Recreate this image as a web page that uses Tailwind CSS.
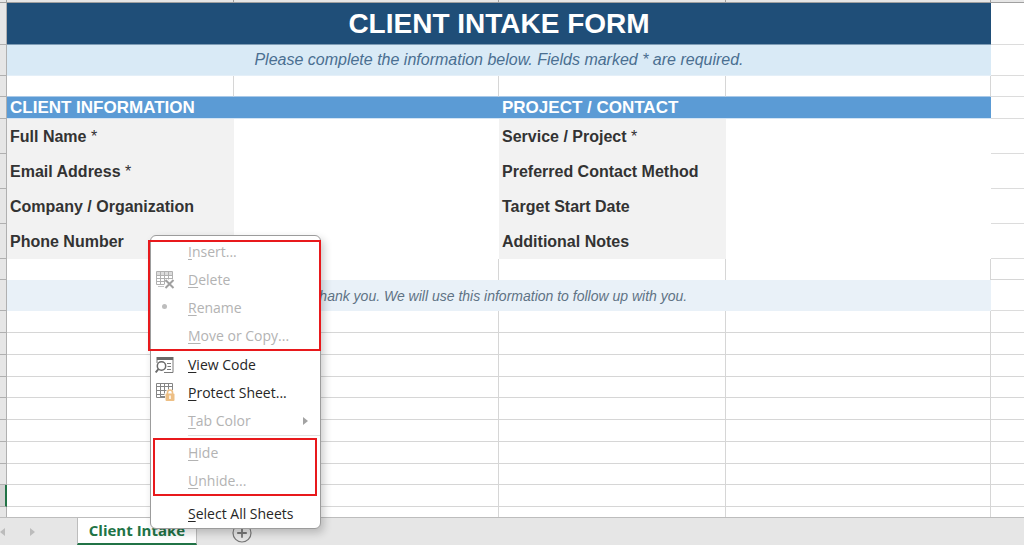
<!DOCTYPE html>
<html lang="en">
  <head>
    <meta charset="UTF-8" />
    <meta name="viewport" content="width=device-width, initial-scale=1.0" />
    <title>Client Intake</title>
    <script src="https://cdn.jsdelivr.net/npm/@tailwindcss/browser@4"></script>
  </head>
  <body class="h-screen flex flex-col overflow-hidden bg-white font-['Liberation_Sans',Arial,sans-serif]">

    <!-- Worksheet -->
    <main class="flex-1 min-h-0 overflow-hidden">
      <table class="w-full table-fixed border-separate border-spacing-0 text-base text-[#333333]">
        <colgroup>
          <col class="w-[7px]" />
          <col class="w-[227px]" />
          <col class="w-[265px]" />
          <col class="w-[227px]" />
          <col class="w-[265px]" />
          <col />
        </colgroup>
        <thead>
          <tr class="h-[3px] bg-[#e6e6e6]">
            <td class="border-r border-b border-[#a0a0a0]"></td>
            <td class="border-r border-b border-[#a0a0a0]"></td>
            <td class="border-r border-b border-[#a0a0a0]"></td>
            <td class="border-r border-b border-[#a0a0a0]"></td>
            <td class="border-r border-b border-[#a0a0a0]"></td>
            <td class="border-b border-[#a0a0a0]"></td>
          </tr>
        </thead>
        <tbody>
          <tr class="h-[42px]">
            <td class="border-r border-b border-[#b0b0b0] bg-[#e6e6e6]"></td>
            <th colspan="4" class="border-b border-[#7f9db6] bg-[#1f4e78] text-white text-[28px] leading-8 font-bold text-center">CLIENT INTAKE FORM</th>
            <td class="border-b border-[#dcdcdc]"></td>
          </tr>
          <tr class="h-[31px]">
            <td class="border-r border-b border-[#b0b0b0] bg-[#e6e6e6]"></td>
            <td colspan="4" class="border-b border-[#e4eff8] bg-[#d9eaf6] text-[#4a6f91] leading-5 italic text-center">Please complete the information below. Fields marked * are required.</td>
            <td class="border-b border-[#dcdcdc]"></td>
          </tr>
          <tr class="h-[21px]">
            <td class="border-r border-b border-[#b0b0b0] bg-[#e6e6e6]"></td>
            <td class="border-r border-b border-r-[#d6d6d6] border-b-[#a9c9e8]"></td>
            <td class="border-r border-b border-r-[#d6d6d6] border-b-[#a9c9e8]"></td>
            <td class="border-r border-b border-r-[#d6d6d6] border-b-[#a9c9e8]"></td>
            <td class="border-r border-b border-r-[#d6d6d6] border-b-[#a9c9e8]"></td>
            <td class="border-b border-[#dcdcdc]"></td>
          </tr>
          <tr class="h-[22px] text-[17px] leading-5 text-white text-left">
            <td class="border-r border-b border-[#b0b0b0] bg-[#e6e6e6]"></td>
            <th colspan="2" class="border-b border-[#d3e4f4] bg-[#5b9bd5] pl-[3px] font-bold">CLIENT INFORMATION</th>
            <th colspan="2" class="border-b border-[#d3e4f4] bg-[#5b9bd5] pl-[3px] font-bold">PROJECT / CONTACT</th>
            <td class="border-b border-[#dcdcdc]"></td>
          </tr>

          <!-- Form fields -->
          <tr class="h-[35px] leading-5 text-left">
            <td class="border-r border-b border-[#b0b0b0] bg-[#e6e6e6]"></td>
            <th class="bg-[#f2f2f2] pl-[3px] font-bold"><label for="full-name">Full Name <span class="font-normal">*</span></label></th>
            <td><input id="full-name" type="text" class="block w-full h-6 px-1 outline-none" /></td>
            <th class="bg-[#f2f2f2] pl-[3px] font-bold"><label for="service">Service / Project <span class="font-normal">*</span></label></th>
            <td><input id="service" type="text" class="block w-full h-6 px-1 outline-none" /></td>
            <td class="border-b border-[#dcdcdc]"></td>
          </tr>
          <tr class="h-[35px] leading-5 text-left">
            <td class="border-r border-b border-[#b0b0b0] bg-[#e6e6e6]"></td>
            <th class="bg-[#f2f2f2] pl-[3px] font-bold"><label for="email">Email Address <span class="font-normal">*</span></label></th>
            <td><input id="email" type="email" class="block w-full h-6 px-1 outline-none" /></td>
            <th class="bg-[#f2f2f2] pl-[3px] font-bold"><label for="contact-method">Preferred Contact Method</label></th>
            <td><input id="contact-method" type="text" class="block w-full h-6 px-1 outline-none" /></td>
            <td class="border-b border-[#dcdcdc]"></td>
          </tr>
          <tr class="h-[35px] leading-5 text-left">
            <td class="border-r border-b border-[#b0b0b0] bg-[#e6e6e6]"></td>
            <th class="bg-[#f2f2f2] pl-[3px] font-bold"><label for="company">Company / Organization</label></th>
            <td><input id="company" type="text" class="block w-full h-6 px-1 outline-none" /></td>
            <th class="bg-[#f2f2f2] pl-[3px] font-bold"><label for="start-date">Target Start Date</label></th>
            <td><input id="start-date" type="text" class="block w-full h-6 px-1 outline-none" /></td>
            <td class="border-b border-[#dcdcdc]"></td>
          </tr>
          <tr class="h-[35px] leading-5 text-left">
            <td class="border-r border-b border-[#b0b0b0] bg-[#e6e6e6]"></td>
            <th class="bg-[#f2f2f2] pl-[3px] font-bold"><label for="phone">Phone Number</label></th>
            <td><input id="phone" type="tel" class="block w-full h-6 px-1 outline-none" /></td>
            <th class="bg-[#f2f2f2] pl-[3px] font-bold"><label for="notes">Additional Notes</label></th>
            <td><input id="notes" type="text" class="block w-full h-6 px-1 outline-none" /></td>
            <td class="border-b border-[#dcdcdc]"></td>
          </tr>
          <tr class="h-[21px]">
            <td class="border-r border-b border-[#b0b0b0] bg-[#e6e6e6]"></td>
            <td class="border-r border-[#d6d6d6]"></td>
            <td class="border-r border-[#d6d6d6]"></td>
            <td class="border-r border-[#d6d6d6]"></td>
            <td class="border-r border-[#d6d6d6]"></td>
            <td class="border-b border-[#d6d6d6]"></td>
          </tr>
          <tr class="h-[31px]">
            <td class="border-r border-b border-[#b0b0b0] bg-[#e6e6e6]"></td>
            <td colspan="4" class="bg-[#e9f1f8] text-[#5f7385] text-sm italic text-center">Thank you. We will use this information to follow up with you.</td>
            <td class="border-b border-[#dcdcdc]"></td>
          </tr>

          <!-- Empty rows -->
          <tr class="h-[22px]">
            <td class="border-r border-b border-[#b0b0b0] bg-[#e6e6e6]"></td>
            <td class="border-r border-b border-[#d6d6d6]"></td>
            <td class="border-r border-b border-[#d6d6d6]"></td>
            <td class="border-r border-b border-[#d6d6d6]"></td>
            <td class="border-r border-b border-[#d6d6d6]"></td>
            <td class="border-b border-[#d6d6d6]"></td>
          </tr>
          <tr class="h-[22px]">
            <td class="border-r border-b border-[#b0b0b0] bg-[#e6e6e6]"></td>
            <td class="border-r border-b border-[#d6d6d6]"></td>
            <td class="border-r border-b border-[#d6d6d6]"></td>
            <td class="border-r border-b border-[#d6d6d6]"></td>
            <td class="border-r border-b border-[#d6d6d6]"></td>
            <td class="border-b border-[#d6d6d6]"></td>
          </tr>
          <tr class="h-[22px]">
            <td class="border-r border-b border-[#b0b0b0] bg-[#e6e6e6]"></td>
            <td class="border-r border-b border-[#d6d6d6]"></td>
            <td class="border-r border-b border-[#d6d6d6]"></td>
            <td class="border-r border-b border-[#d6d6d6]"></td>
            <td class="border-r border-b border-[#d6d6d6]"></td>
            <td class="border-b border-[#d6d6d6]"></td>
          </tr>
          <tr class="h-[21px]">
            <td class="border-r border-b border-[#b0b0b0] bg-[#e6e6e6]"></td>
            <td class="border-r border-b border-[#d6d6d6]"></td>
            <td class="border-r border-b border-[#d6d6d6]"></td>
            <td class="border-r border-b border-[#d6d6d6]"></td>
            <td class="border-r border-b border-[#d6d6d6]"></td>
            <td class="border-b border-[#d6d6d6]"></td>
          </tr>
          <tr class="h-[22px]">
            <td class="border-r border-b border-[#b0b0b0] bg-[#e6e6e6]"></td>
            <td class="border-r border-b border-[#d6d6d6]"></td>
            <td class="border-r border-b border-[#d6d6d6]"></td>
            <td class="border-r border-b border-[#d6d6d6]"></td>
            <td class="border-r border-b border-[#d6d6d6]"></td>
            <td class="border-b border-[#d6d6d6]"></td>
          </tr>
          <tr class="h-[22px]">
            <td class="border-r border-b border-[#b0b0b0] bg-[#e6e6e6]"></td>
            <td class="border-r border-b border-[#d6d6d6]"></td>
            <td class="border-r border-b border-[#d6d6d6]"></td>
            <td class="border-r border-b border-[#d6d6d6]"></td>
            <td class="border-r border-b border-[#d6d6d6]"></td>
            <td class="border-b border-[#d6d6d6]"></td>
          </tr>
          <tr class="h-[22px]">
            <td class="border-r border-b border-[#b0b0b0] bg-[#e6e6e6]"></td>
            <td class="border-r border-b border-[#d6d6d6]"></td>
            <td class="border-r border-b border-[#d6d6d6]"></td>
            <td class="border-r border-b border-[#d6d6d6]"></td>
            <td class="border-r border-b border-[#d6d6d6]"></td>
            <td class="border-b border-[#d6d6d6]"></td>
          </tr>
          <tr class="h-[21px]">
            <td class="border-r border-b border-[#b0b0b0] bg-[#e6e6e6]"></td>
            <td class="border-r border-b border-[#d6d6d6]"></td>
            <td class="border-r border-b border-[#d6d6d6]"></td>
            <td class="border-r border-b border-[#d6d6d6]"></td>
            <td class="border-r border-b border-[#d6d6d6]"></td>
            <td class="border-b border-[#d6d6d6]"></td>
          </tr>
          <!-- active row -->
          <tr class="h-[22px]">
            <td class="border-r-2 border-b border-r-[#217346] border-b-[#b0b0b0] bg-[#d2d2d2]"></td>
            <td class="border-r border-b border-[#d6d6d6]"></td>
            <td class="border-r border-b border-[#d6d6d6]"></td>
            <td class="border-r border-b border-[#d6d6d6]"></td>
            <td class="border-r border-b border-[#d6d6d6]"></td>
            <td class="border-b border-[#d6d6d6]"></td>
          </tr>
          <tr class="h-[22px]">
            <td class="border-r border-[#b0b0b0] bg-[#e6e6e6]"></td>
            <td class="border-r border-[#d6d6d6]"></td>
            <td class="border-r border-[#d6d6d6]"></td>
            <td class="border-r border-[#d6d6d6]"></td>
            <td class="border-r border-[#d6d6d6]"></td>
            <td></td>
          </tr>
        </tbody>
      </table>
    </main>

    <!-- Sheet tabs -->
    <footer class="relative h-7 shrink-0 flex bg-[#e6e6e6] border-t border-[#bdbdbd] font-['Open_Sans','Noto_Sans',sans-serif]">
      <div class="w-[77px] flex items-center gap-[25px]">
        <button type="button" aria-label="Previous sheet">
          <svg class="block w-[5px] h-2 fill-[#bcbcbc]" viewBox="0 0 5 8"><path d="M5 0v8L0 4z" /></svg>
        </button>
        <button type="button" aria-label="Next sheet">
          <svg class="block w-[5px] h-2 fill-[#bcbcbc]" viewBox="0 0 5 8"><path d="M0 0v8l5-4z" /></svg>
        </button>
      </div>
      <button type="button" class="w-[120px] pb-0.5 bg-white border-x border-x-[#bdbdbd] border-b-2 border-b-[#217346] text-[#217346] text-[15px] leading-5 font-bold">Client Intake</button>
      <button type="button" aria-label="New sheet" class="ml-[35px] mb-0.5">
        <svg class="block size-5 mt-1" viewBox="0 0 20 20" fill="none" stroke="#777777">
          <circle cx="10" cy="10" r="9" stroke-width="1.2" />
          <path d="M10 5.2v9.6M5.2 10h9.6" stroke-width="1.8" />
        </svg>
      </button>

      <!-- Context menu -->
      <div role="menu" class="absolute z-10 left-[150px] bottom-4 w-[171px] pt-0.5 bg-white border border-[#9c9c9c] rounded-md shadow-[3px_4px_8px_rgba(0,0,0,0.2)] text-sm text-[#262626]">
        <div class="relative mb-px text-[#b3b3b3]">
          <button type="button" role="menuitem" disabled class="w-full h-7 pl-[37px] flex items-center"><span><u class="underline-offset-2">I</u>nsert...</span></button>
          <button type="button" role="menuitem" disabled class="w-full h-7 flex items-center">
            <span class="w-[37px] pl-[5px]">
              <svg class="block w-[19px] h-[18px]" viewBox="0 0 19 18" fill="none" stroke="#b0b0b0">
                <path d="M1 1h16v3H1z" fill="#dcdcdc" stroke="none" />
                <path d="M8 13.500H.5V.5h16V8M.5 4.500h16M.5 7.500h16M.5 10.500h9M4.500.5v13M8.500.5v13M12.500.5v8" />
                <path d="M2 15.500h6" stroke="#c4c4c4" />
                <path d="M9.500 9l8 8M17.500 9l-8 8" stroke="#a0a0a0" stroke-width="2" />
              </svg>
            </span>
            <span><u class="underline-offset-2">D</u>elete</span>
          </button>
          <button type="button" role="menuitem" disabled class="w-full h-7 flex items-center">
            <span class="w-[37px] pl-[11px]"><span class="block size-[5px] mb-1 rounded-full bg-[#bdbdbd]"></span></span>
            <span><u class="underline-offset-2">R</u>ename</span>
          </button>
          <button type="button" role="menuitem" disabled class="w-full h-7 pl-[37px] flex items-center"><span><u class="underline-offset-2">M</u>ove or Copy...</span></button>
          <span class="absolute -left-[3px] -right-px top-0.5 -bottom-px border-2 border-[#e8191c] pointer-events-none"></span>
        </div>
        <button type="button" role="menuitem" class="w-full h-7 flex items-center">
          <span class="w-[37px] pl-1">
            <svg class="block w-[19px] h-[17px]" viewBox="0 0 19 17" fill="none" stroke="#7a7a7a">
              <path d="M1.500 0h17v3h-17z" fill="#6a6a6a" stroke="none" />
              <path d="M2 3v3M18 3v12.500H9" />
              <path d="M12 6.500h4M12.500 9.500H16M12 12.500h4" />
              <circle cx="6.500" cy="9" r="4.200" stroke="#6a6a6a" stroke-width="1.500" fill="#fff" />
              <path d="M3.500 12L.7 15.500" stroke="#6a6a6a" stroke-width="2" />
            </svg>
          </span>
          <span><u class="underline-offset-2">V</u>iew Code</span>
        </button>
        <button type="button" role="menuitem" class="w-full h-7 flex items-center">
          <span class="w-[37px] pl-[5px]">
            <svg class="block w-[19px] h-[18px] mb-0.5" viewBox="0 0 19 18" fill="none" stroke="#858585">
              <path d="M9 14.500H.5V.5h16V7M.5 3.500h16M.5 7.500h10M.5 11.500h8M4.500.5v14M8.500.5v10M12.500.5v6" />
              <path d="M5 13.500h4" />
              <path d="M11.500 11V9.500a2.500 2.500 0 0 1 5 0V11" stroke="#edbf85" stroke-width="1.600" />
              <rect x="9.500" y="10.500" width="9" height="7.500" rx="1" fill="#edbf85" stroke="none" />
              <path d="M14 12.500v3.500" stroke="#fff" stroke-width="1.500" />
            </svg>
          </span>
          <span><u class="underline-offset-2">P</u>rotect Sheet...</span>
        </button>
        <button type="button" role="menuitem" disabled class="w-full h-7 pl-[37px] pr-3 flex items-center justify-between text-[#b3b3b3]">
          <span><u class="underline-offset-2">T</u>ab Color</span>
          <svg class="w-[5px] h-2 fill-[#a3a3a3]" viewBox="0 0 5 8"><path d="M0 0v8l5-4z" /></svg>
        </button>
        <hr class="ml-[37px] mb-[3px] border-[#e1e1e1]" />
        <div class="relative text-[#b3b3b3]">
          <button type="button" role="menuitem" disabled class="w-full h-7 pl-[37px] flex items-center"><span><u class="underline-offset-2">H</u>ide</span></button>
          <button type="button" role="menuitem" disabled class="w-full h-7 pl-[37px] flex items-center"><span><u class="underline-offset-2">U</u>nhide...</span></button>
          <span class="absolute left-0.5 right-[3px] -inset-y-px border-2 border-[#e8191c] pointer-events-none"></span>
        </div>
        <button type="button" role="menuitem" class="w-full h-7 mt-[5px] pl-[37px] flex items-center"><span><u class="underline-offset-2">S</u>elect All Sheets</span></button>
      </div>
    </footer>
  </body>
</html>
